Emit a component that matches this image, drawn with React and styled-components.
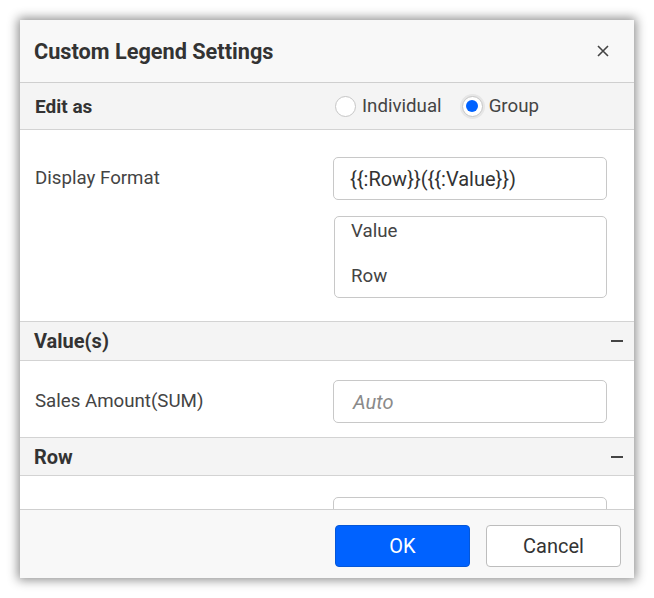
import React from "react";
import styled, { createGlobalStyle } from "styled-components";

const Global = createGlobalStyle`
  html, body { margin: 0; padding: 0; background: #ffffff; }
  body { font-family: Roboto, "Noto Sans", sans-serif; color: #333; }
  * { box-sizing: border-box; }
`;

const Page = styled.div`
  width: 654px;
  height: 598px;
  padding: 20px 20px 0 20px;
`;

const Dialog = styled.div`
  width: 614px;
  height: 558px;
  background: #fff;
  display: flex;
  flex-direction: column;
  box-shadow: 0 0 10px 2px rgba(0, 0, 0, 0.45);
  overflow: hidden;
`;

const Header = styled.div`
  height: 63px;
  flex: none;
  display: flex;
  align-items: center;
  justify-content: space-between;
  padding: 0 22px 0 14px;
  background: #f8f8f8;
  border-bottom: 1px solid #cfcfcf;
`;

const Title = styled.div`
  font-size: 21.7px;
  font-weight: 700;
  color: #333;
`;

const CloseBtn = styled.div`
  width: 18px;
  height: 18px;
  display: flex;
  align-items: center;
  justify-content: center;
`;

const EditBar = styled.div`
  height: 47px;
  flex: none;
  display: flex;
  align-items: center;
  padding: 0 15px;
  background: #f4f4f4;
  border-bottom: 1px solid #d3d3d3;
`;

const EditLabel = styled.div`
  font-size: 19px;
  font-weight: 700;
  width: 300px;
`;

const RadioGroup = styled.div`
  display: flex;
  align-items: center;
  gap: 20px;
`;

const RadioItem = styled.label`
  display: flex;
  align-items: center;
  gap: 6px;
  font-size: 18.7px;
  color: #444;
`;

const RadioCircle = styled.span`
  width: 21px;
  height: 21px;
  border-radius: 50%;
  border: 1px solid #c6c6c6;
  background: #fff;
  display: flex;
  align-items: center;
  justify-content: center;
  box-shadow: ${(p) => (p.$checked ? "0 0 0 2px #e6e6e6" : "none")};
  &::after {
    content: "";
    width: 12px;
    height: 12px;
    border-radius: 50%;
    background: ${(p) => (p.$checked ? "#0062ff" : "transparent")};
  }
`;

const Body = styled.div`
  flex: 1;
  overflow: hidden;
`;

const FieldRow = styled.div`
  display: grid;
  grid-template-columns: 298px 274px;
  padding: ${(p) => p.$pad || "19px 0 14px 15px"};
  align-items: start;
`;

const Label = styled.div`
  font-size: 18.7px;
  color: #444;
  line-height: 43px;
`;

const Stack = styled.div`
  display: flex;
  flex-direction: column;
  gap: 16px;
`;

const Input = styled.div`
  height: 43px;
  border: 1px solid #c8c8c8;
  border-radius: 5px;
  display: flex;
  align-items: center;
  padding: 0 ${(p) => (p.$placeholder ? "19px" : "16px")};
  font-size: 20px;
  color: ${(p) => (p.$placeholder ? "#8a8a8a" : "#333")};
  font-style: ${(p) => (p.$placeholder ? "italic" : "normal")};
  background: #fff;
`;

const ListBox = styled.div`
  height: 82px;
  margin-left: 1px;
  border: 1px solid #c8c8c8;
  border-radius: 5px;
  padding: 3px 16px 0 16px;
  display: flex;
  flex-direction: column;
  gap: 23px;
  font-size: 18.7px;
  color: #444;
`;

const ListItem = styled.div`
  line-height: 22px;
`;

const Section = styled.div`
  height: ${(p) => p.$h || 40}px;
  display: flex;
  align-items: center;
  justify-content: space-between;
  padding: 0 11px 0 14px;
  background: #f4f4f4;
  border-top: 1px solid #d3d3d3;
  border-bottom: 1px solid #d3d3d3;
  font-size: 20px;
  font-weight: 700;
  color: #333;
`;

const Minus = styled.span`
  width: 12px;
  height: 2px;
  background: #444;
`;

const Footer = styled.div`
  height: 69px;
  flex: none;
  display: flex;
  justify-content: flex-end;
  align-items: flex-start;
  gap: 16px;
  padding: 15px 13px 0 0;
  background: #f8f8f8;
  border-top: 1px solid #cfcfcf;
`;

const Button = styled.button`
  width: 135px;
  height: 42px;
  border-radius: 4px;
  font-family: Roboto, sans-serif;
  font-size: 20px;
  border: 1px solid ${(p) => (p.$primary ? "#0557d8" : "#bdbdbd")};
  background: ${(p) => (p.$primary ? "#0062ff" : "#fff")};
  color: ${(p) => (p.$primary ? "#fff" : "#333")};
`;

export default function App() {
  return (
    <>
      <Global />
      <Page>
        <Dialog>
          <Header>
            <Title>Custom Legend Settings</Title>
            <CloseBtn>
              <svg width="12" height="12" viewBox="0 0 12 12">
                <path d="M1 1 L11 11 M11 1 L1 11" stroke="#444" strokeWidth="1.6" />
              </svg>
            </CloseBtn>
          </Header>
          <EditBar>
            <EditLabel>Edit as</EditLabel>
            <RadioGroup>
              <RadioItem>
                <RadioCircle />
                Individual
              </RadioItem>
              <RadioItem>
                <RadioCircle $checked />
                Group
              </RadioItem>
            </RadioGroup>
          </EditBar>
          <Body>
            <FieldRow $pad="27px 0 23px 15px">
              <Label>Display Format</Label>
              <Stack>
                <Input>{"{{:Row}}({{:Value}})"}</Input>
                <ListBox>
                  <ListItem>Value</ListItem>
                  <ListItem>Row</ListItem>
                </ListBox>
              </Stack>
            </FieldRow>
            <Section>
              Value(s)
              <Minus />
            </Section>
            <FieldRow>
              <Label>Sales Amount(SUM)</Label>
              <Input $placeholder>Auto</Input>
            </FieldRow>
            <Section $h={39}>
              Row
              <Minus />
            </Section>
            <FieldRow $pad="21px 0 14px 15px">
              <Label></Label>
              <Input $placeholder></Input>
            </FieldRow>
          </Body>
          <Footer>
            <Button $primary>OK</Button>
            <Button>Cancel</Button>
          </Footer>
        </Dialog>
      </Page>
    </>
  );
}
